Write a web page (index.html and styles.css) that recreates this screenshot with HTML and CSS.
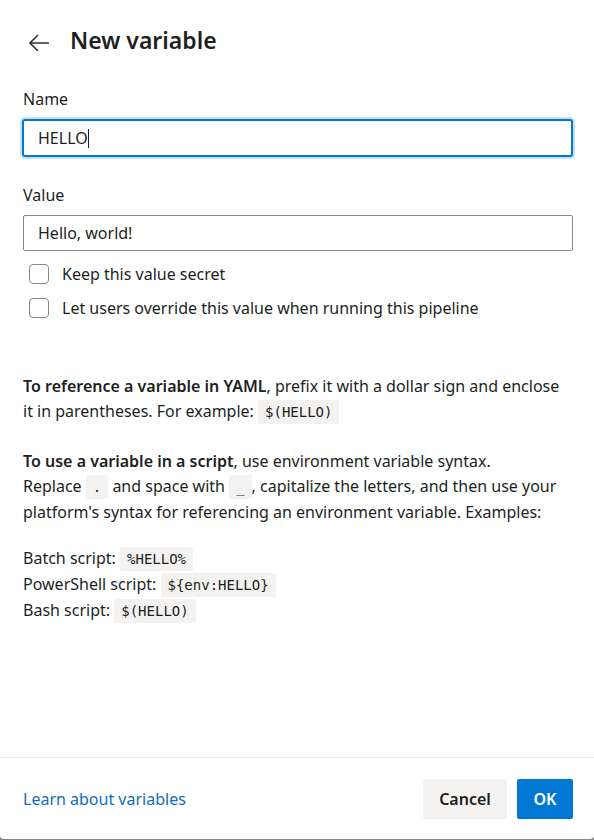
FILE: index.html
```html
<!DOCTYPE html>
<html>
<head>
<meta charset="utf-8">
<link rel="stylesheet" href="styles.css">
</head>
<body>
<div class="panel">
  <div class="header">
    <button class="back" aria-label="Back">
      <svg width="20" height="18" viewBox="0 0 20 18"><path d="M9 1 L1 9 L9 17 M1 9 H20" fill="none" stroke="#323130" stroke-width="1.6"/></svg>
    </button>
    <h1 class="title">New variable</h1>
  </div>
  <div class="content">
    <label class="label">Name</label>
    <div class="input focused"><span>HELLO</span><span class="caret"></span></div>
    <label class="label label-value">Value</label>
    <div class="input"><span>Hello, world!</span></div>
    <div class="checks">
      <div class="check"><span class="box"></span><span>Keep this value secret</span></div>
      <div class="check"><span class="box"></span><span>Let users override this value when running this pipeline</span></div>
    </div>
    <p class="para para-first"><b>To reference a variable in YAML</b>, prefix it with a dollar sign and enclose<br>it in parentheses. For example: <code>$(HELLO)</code></p>
    <p class="para para-second"><b>To use a variable in a script</b>, use environment variable syntax.<br>Replace <code>.</code> and space with <code>_</code>, capitalize the letters, and then use your<br>platform's syntax for referencing an environment variable. Examples:</p>
    <p class="para para-ex">Batch script: <code>%HELLO%</code><br>PowerShell script: <code>${env:HELLO}</code><br>Bash script: <code>$(HELLO)</code></p>
  </div>
  <div class="footer">
    <a class="link" href="#">Learn about variables</a>
    <div class="actions">
      <button class="btn btn-cancel">Cancel</button>
      <button class="btn btn-ok">OK</button>
    </div>
  </div>
</div>
</body>
</html>
```
FILE: styles.css
```css
* { box-sizing: border-box; }
html, body { margin: 0; padding: 0; background: #8a8886; }
body {
  font-family: "Segoe UI", "Noto Sans", sans-serif;
  color: #201f1e;
  font-size: 16px;
}
.panel {
  width: 594px;
  height: 839px;
  background: #fff;
  border-radius: 0 0 4px 4px;
  display: flex;
  flex-direction: column;
}
.header {
  display: flex;
  align-items: center;
  padding: 24px 20px 0 29px;
  height: 56px;
}
.back {
  border: 0;
  background: none;
  padding: 0;
  width: 20px;
  height: 18px;
  margin-top: 6px;
  display: flex;
}
.title {
  margin: 0 0 0 21px;
  font-size: 23px;
  font-weight: 600;
  line-height: 32px;
}
.content {
  flex: 1;
  padding: 32px 21px 0 23px;
}
.label {
  display: block;
  line-height: 22px;
  height: 22px;
  margin-bottom: 9px;
}
.label-value { margin-top: 27px; }
.input {
  height: 36px;
  border: 1px solid #8a8886;
  border-radius: 2px;
  display: flex;
  align-items: center;
  padding-left: 14px;
}
.input.focused {
  margin-left: -1px;
  height: 38px;
  border: 2px solid #0078d4;
  box-shadow: 0 0 0 2px #c7e0f4;
  border-radius: 3px;
}
.caret {
  display: inline-block;
  width: 1px;
  height: 19px;
  background: #201f1e;
}
.checks {
  padding-left: 6px;
  margin-top: 13px;
}
.check {
  display: flex;
  align-items: center;
  height: 20px;
  margin-bottom: 14px;
}
.check:last-child { margin-bottom: 0; }
.box {
  width: 20px;
  height: 20px;
  border: 1px solid #8a8886;
  border-radius: 4px;
  margin-right: 13px;
}
.para {
  margin: 0;
  line-height: 25px;
  white-space: nowrap;
}
.para b { font-weight: 600; }
.para-first { margin-top: 56px; }
.para-second { margin-top: 24px; }
.para-ex { margin-top: 21px; line-height: 25px; }
code {
  font-family: "DejaVu Sans Mono", monospace;
  font-size: 14px;
  background: #f3f2f1;
  padding: 4px 7px;
  border-radius: 2px;
}
.footer {
  border-top: 1px solid #eaeaea;
  height: 82px;
  display: flex;
  align-items: center;
  justify-content: space-between;
  padding: 0 21px 0 23px;
}
.link {
  color: #0f6cbd;
  text-decoration: none;
}
.actions { display: flex; gap: 10px; }
.btn {
  height: 40px;
  border: 0;
  border-radius: 2px;
  font-family: inherit;
  font-size: 16px;
  font-weight: 600;
  padding: 0;
}
.btn-cancel { background: #f3f2f1; color: #201f1e; width: 84px; }
.btn-ok { background: #0078d4; color: #fff; width: 56px; }
```
